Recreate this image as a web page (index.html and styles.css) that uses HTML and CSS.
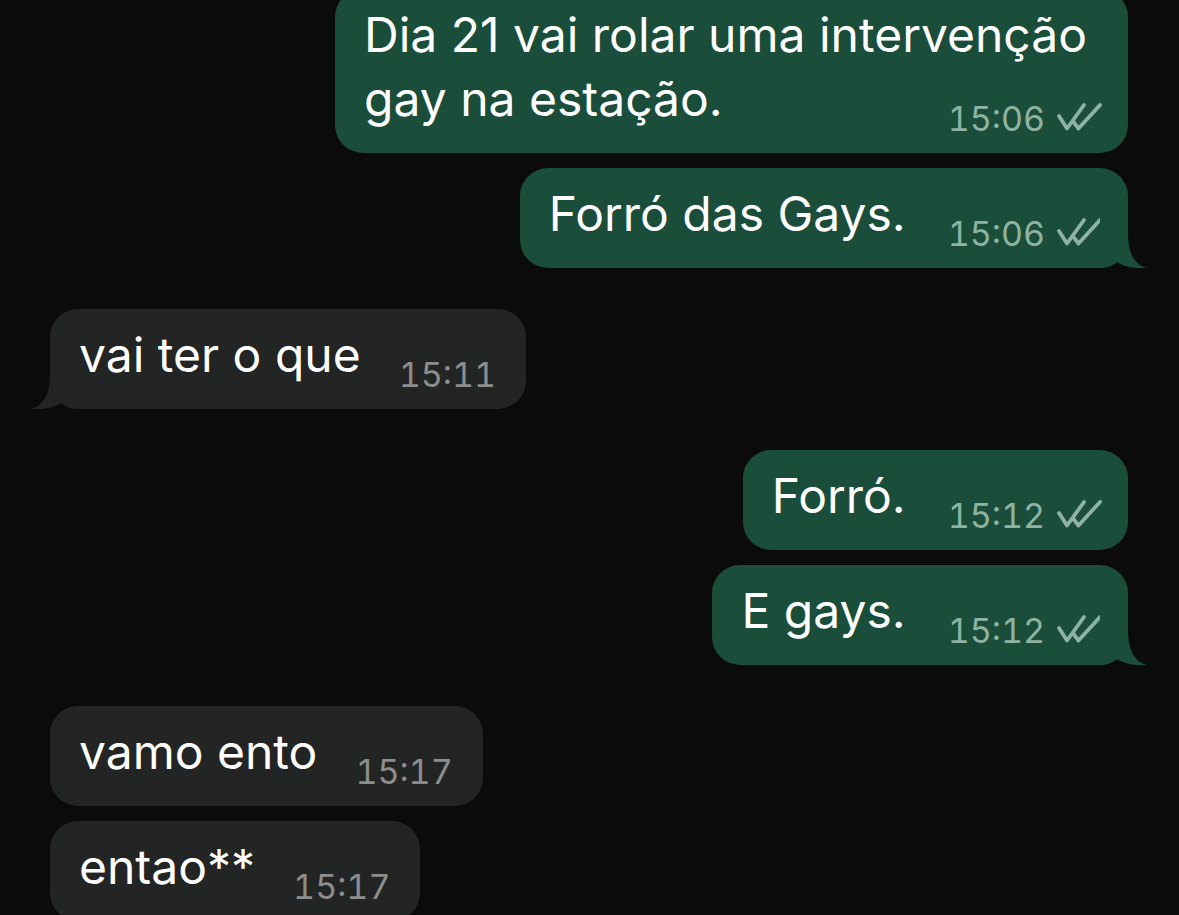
FILE: index.html
```html
<!DOCTYPE html>
<html lang="pt-br">
<head>
<meta charset="UTF-8">
<meta name="viewport" content="width=device-width, initial-scale=1.0">
<title>Conversa</title>
<link rel="stylesheet" href="styles.css">
</head>
<body>
<div class="chat">
    <div class="group">
        <div class="bubble out multi">
            <span class="text">Dia 21 vai rolar uma intervenção gay na estação.</span>
            <span class="meta"><span class="time">15:06</span><svg class="ticks" viewBox="0 0 45 28"><path d="M2 13 L10 25.5 L27 2 M16.5 19 L21.5 25.5 L43 2"/></svg></span>
        </div>
        <div class="bubble out">
            <span class="text">Forró das Gays.</span>
            <span class="meta"><span class="time">15:06</span><svg class="ticks" viewBox="0 0 45 28"><path d="M2 13 L10 25.5 L27 2 M16.5 19 L21.5 25.5 L43 2"/></svg></span>
            <svg class="tail" viewBox="0 0 48 50"><path d="M28 0 L28 14 C28 38 36 47 47 50 C38 51 24 49 17 44 A28 28 0 0 1 0 50 L0 0 Z"/></svg>
        </div>
    </div>

    <div class="group">
        <div class="bubble in">
            <span class="text">vai ter o que</span>
            <span class="meta"><span class="time">15:11</span></span>
            <svg class="tail" viewBox="0 0 48 50"><path d="M28 0 L28 14 C28 38 36 47 47 50 C38 51 24 49 17 44 A28 28 0 0 1 0 50 L0 0 Z"/></svg>
        </div>
    </div>

    <div class="group">
        <div class="bubble out">
            <span class="text">Forró.</span>
            <span class="meta"><span class="time">15:12</span><svg class="ticks" viewBox="0 0 45 28"><path d="M2 13 L10 25.5 L27 2 M16.5 19 L21.5 25.5 L43 2"/></svg></span>
        </div>
        <div class="bubble out">
            <span class="text">E gays.</span>
            <span class="meta"><span class="time">15:12</span><svg class="ticks" viewBox="0 0 45 28"><path d="M2 13 L10 25.5 L27 2 M16.5 19 L21.5 25.5 L43 2"/></svg></span>
            <svg class="tail" viewBox="0 0 48 50"><path d="M28 0 L28 14 C28 38 36 47 47 50 C38 51 24 49 17 44 A28 28 0 0 1 0 50 L0 0 Z"/></svg>
        </div>
    </div>

    <div class="group">
        <div class="bubble in">
            <span class="text">vamo ento</span>
            <span class="meta"><span class="time">15:17</span></span>
        </div>
        <div class="bubble in">
            <span class="text">entao**</span>
            <span class="meta"><span class="time">15:17</span></span>
        </div>
    </div>
</div>
</body>
</html>
```

FILE: styles.css
```css
html, body {
    height: 100%;
}
body {
    margin: 0;
    background-color: #0b0b0b;
    font-family: Inter, "Noto Sans", sans-serif;
    color: #fff;
    overflow: hidden;
}
.chat {
    display: flex;
    flex-direction: column;
    gap: 41px;
    margin-top: -11px;
    padding: 0 51px 0 50px;
}
.group {
    display: flex;
    flex-direction: column;
    gap: 15px;
}
.bubble {
    position: relative;
    display: flex;
    align-items: flex-end;
    gap: 42px;
    max-width: 800px;
    padding: 14px 26px 17px 29px;
    border-radius: 28px;
}
.bubble.out {
    align-self: flex-end;
    background-color: #1a4d3a;
}
.bubble.in {
    align-self: flex-start;
    background-color: #232424;
    gap: 38px;
    padding-right: 30px;
}
.bubble .text {
    font-size: 48px;
    line-height: 64px;
    margin-bottom: 5px;
}
.bubble .meta {
    display: flex;
    align-items: center;
    gap: 12px;
    font-size: 34px;
    line-height: 34px;
    font-variant-numeric: tabular-nums;
    white-space: nowrap;
}
.bubble.out .meta {
    color: #8fb3a2;
}
.bubble.in .meta {
    color: #8d8d8d;
}
.ticks {
    width: 45px;
    height: 28px;
    fill: none;
    stroke: #8fb3a2;
    stroke-width: 3.8;
    stroke-linecap: round;
    stroke-linejoin: round;
    margin-top: -5px;
}
.bubble.multi {
    display: flow-root;
    width: 738px;
    font-size: 48px;
    line-height: 64px;
}
.bubble.multi .text {
    margin-bottom: 0;
}
.bubble.multi .meta {
    float: right;
    margin-top: 35px;
}
.tail {
    position: absolute;
    bottom: 0;
    width: 48px;
    height: 50px;
}
.bubble.out .tail {
    right: -20px;
    fill: #1a4d3a;
}
.bubble.in .tail {
    left: -20px;
    fill: #232424;
    transform: scaleX(-1);
}
```
